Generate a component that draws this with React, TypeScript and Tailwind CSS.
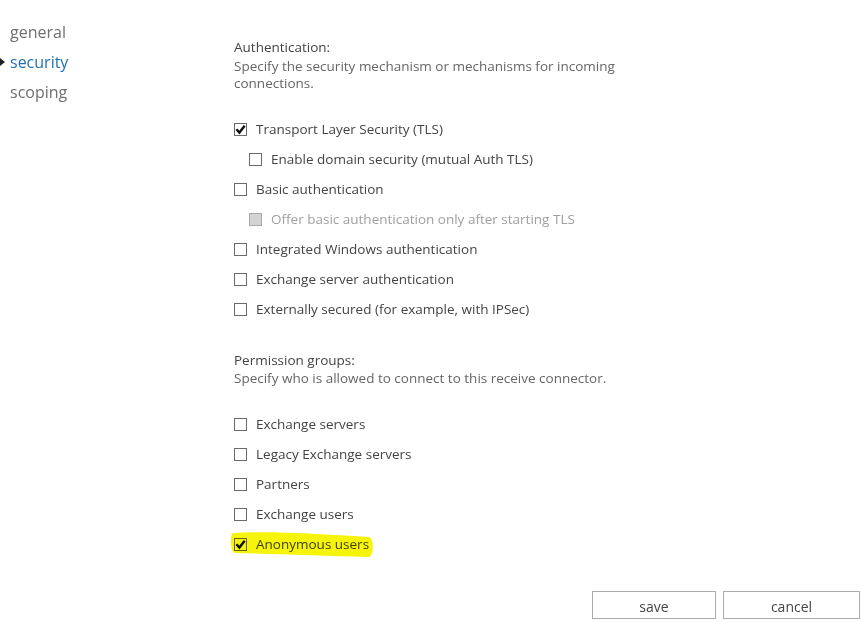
import React from "react";

type Item = { label: string; checked?: boolean; indent?: boolean; disabled?: boolean };

const authItems: Item[] = [
  { label: "Transport Layer Security (TLS)", checked: true },
  { label: "Enable domain security (mutual Auth TLS)", indent: true },
  { label: "Basic authentication" },
  { label: "Offer basic authentication only after starting TLS", indent: true, disabled: true },
  { label: "Integrated Windows authentication" },
  { label: "Exchange server authentication" },
  { label: "Externally secured (for example, with IPSec)" },
];

const permItems: Item[] = [
  { label: "Exchange servers" },
  { label: "Legacy Exchange servers" },
  { label: "Partners" },
  { label: "Exchange users" },
  { label: "Anonymous users", checked: true },
];

function CheckRow({ item }: { item: Item }) {
  return (
    <div className={`flex h-[30px] items-center ${item.indent ? "pl-[15px]" : ""}`}>
      <span
        className={`flex h-[13px] w-[13px] shrink-0 items-center justify-center border ${
          item.disabled ? "border-[#a8a8a8] bg-[#d4d4d4]" : "border-[#6a6a6a] bg-white"
        }`}
      >
        {item.checked && (
          <svg width="11" height="11" viewBox="0 0 10 10">
            <path d="M1.3 4.8 L4 7.8 L8.8 1.6" fill="none" stroke="#111" strokeWidth="2.2" />
          </svg>
        )}
      </span>
      <span className={`ml-[9px] ${item.disabled ? "text-[#a0a0a0]" : "text-[#444]"}`}>
        {item.label}
      </span>
    </div>
  );
}

export default function App() {
  return (
    <div
      className="relative flex h-[622px] w-[861px] overflow-hidden bg-white text-[13.5px] leading-[17px]"
      style={{ fontFamily: '"Open Sans", "Noto Sans", sans-serif' }}
    >
      {/* left nav */}
      <nav className="relative w-[234px] shrink-0 pl-[10px] pt-[17px] text-[16px] leading-[30px] text-[#6f6f6f]">
        <div>general</div>
        <div className="relative text-[#1f6fb4]">
          <span className="absolute left-[-10px] top-[11px] h-0 w-0 border-y-[4px] border-l-[5px] border-y-transparent border-l-[#222]" />
          security
        </div>
        <div>scoping</div>
      </nav>

      {/* main form */}
      <main className="flex flex-1 flex-col pt-[39px]">
        <div className="text-[#444]">Authentication:</div>
        <div className="mt-[2px] w-[400px] text-[#666]">
          Specify the security mechanism or mechanisms for incoming connections.
        </div>

        <div className="mt-[22px]">
          {authItems.map((it) => (
            <CheckRow key={it.label} item={it} />
          ))}
        </div>

        <div className="mt-[28px] text-[#444]">Permission groups:</div>
        <div className="mt-[1px] text-[#666]">Specify who is allowed to connect to this receive connector.</div>

        <div className="mt-[22px]">
          {permItems.map((it) => (
            <CheckRow key={it.label} item={it} />
          ))}
        </div>

        <div className="mt-[32px] flex justify-end gap-[7px] pr-[1px]">
          <button className="h-[28px] w-[124px] border border-[#ababab] bg-white pt-[3px] text-[14px] text-[#444]">
            save
          </button>
          <button className="h-[28px] w-[137px] border border-[#ababab] bg-white pt-[3px] text-[14px] text-[#444]">
            cancel
          </button>
        </div>
      </main>

      {/* highlighter mark */}
      <svg
        className="pointer-events-none absolute left-[229px] top-[530px] mix-blend-multiply"
        width="146"
        height="30"
        viewBox="0 0 146 30"
      >
        <path
          d="M4 3 C40 1 90 4 140 7 C145 8 145 26 140 27 C95 26 45 24 6 23 C1 22 1 4 4 3 Z"
          fill="#f7f40c"
        />
      </svg>
    </div>
  );
}
